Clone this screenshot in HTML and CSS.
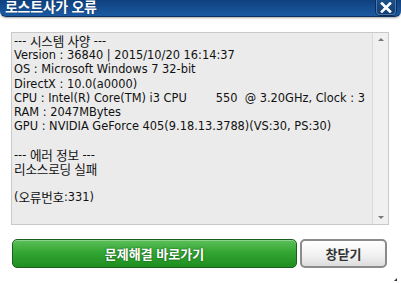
FILE: index.html
```html
<!DOCTYPE html>
<html lang="ko">
<head>
<meta charset="utf-8">
<link rel="stylesheet" href="styles.css">
</head>
<body>
<div class="win">
  <div class="titlebar">
    <span class="title">로스트사가 오류</span>
    <span class="close"><svg width="12" height="11" viewBox="0 0 12 11"><path d="M2 1.5 L10 9.5 M10 1.5 L2 9.5" stroke="#fff" stroke-width="2.6" stroke-linecap="square"/></svg></span>
  </div>
  <div class="content">
    <div class="logbox">
      <div class="logtext">--- <span class="ko">시스템 사양</span> ---
Version : 36840 | 2015/10/20 16:14:37
OS : Microsoft Windows 7 32-bit
DirectX : 10.0(a0000)
CPU : Intel(R) Core(TM) i3 CPU        550  @ 3.20GHz, Clock : 3
RAM : 2047MBytes
GPU : NVIDIA GeForce 405(9.18.13.3788)(VS:30, PS:30)

--- <span class="ko">에러 정보</span> ---
<span class="ko">리소스로딩 실패</span>

(<span class="ko">오류번호</span>:331)</div>
      <div class="scrollbar">
        <span class="arrow up"></span>
        <span class="arrow down"></span>
      </div>
    </div>
    <div class="buttons">
      <button class="btn green">문제해결 바로가기</button>
      <button class="btn gray">창닫기</button>
    </div>
  </div>
  <span class="grip"></span>
</div>
</body>
</html>
```
FILE: styles.css
```css
* { box-sizing: border-box; }
html, body { margin: 0; padding: 0; background: #fff; }
body { width: 401px; height: 283px; overflow: hidden; font-family: "DejaVu Sans", "Noto Sans CJK KR", sans-serif; }
.win { position: relative; width: 401px; height: 283px; }
.titlebar {
  height: 17px;
  background: linear-gradient(#0f417f, #1b5aa2);
  border-bottom: 1px solid #0b3263;
  border-bottom-left-radius: 6px;
  border-bottom-right-radius: 6px;
  box-shadow: 0 1px 2px rgba(0,0,0,0.35);
  display: flex;
  justify-content: space-between;
  align-items: flex-start;
  padding: 0 5px 0 5px;
}
.title {
  color: #fff;
  font-family: "Noto Sans CJK KR", sans-serif;
  font-weight: 700;
  font-size: 14px;
  line-height: 14px;
  margin-top: -1px;
  letter-spacing: -0.3px;
  text-shadow: 0 0 1px #062550;
}
.close {
  width: 20px;
  height: 15px;
  background: linear-gradient(#1c4f8a, #123e72);
  border: 1px solid #4d77a8;
  border-top: none;
  border-radius: 0 0 4px 4px;
  box-shadow: 0 0 0 1px #0a2e5c;
  display: flex;
  align-items: center;
  justify-content: center;
}
.content { padding: 15px 12px 0 11px; }
.logbox {
  height: 193px;
  border: 1px solid #c9c9c9;
  background: #ebebeb;
  display: flex;
}
.logtext {
  flex: 1;
  white-space: pre;
  overflow: hidden;
  font-family: "DejaVu Sans", "Noto Sans CJK KR", sans-serif;
  font-size: 11.4px;
  line-height: 14.2px;
  color: #111;
  padding: 1px 0 0 2px;
}
.ko {
  display: inline-block;
  height: 14px;
  vertical-align: top;
  font-family: "Noto Sans CJK KR", sans-serif;
  font-size: 12.6px;
  line-height: 14px;
  letter-spacing: -0.2px;
}
.scrollbar {
  width: 16px;
  background: #f0f0f0;
  border-left: 1px solid #dadada;
  position: relative;
}
.arrow { position: absolute; left: 5px; width: 0; height: 0; border-left: 3px solid transparent; border-right: 3px solid transparent; }
.arrow.up { top: 5px; border-bottom: 3px solid #777; }
.arrow.down { bottom: 5px; border-top: 3px solid #777; }
.buttons { display: flex; gap: 3px; margin-top: 14px; padding-left: 1px; }
.btn {
  height: 29px;
  font-family: "Noto Sans CJK KR", sans-serif;
  font-weight: 700;
  font-size: 13px;
  border-radius: 5px;
  padding: 0;
  margin: 0;
}
.btn.green {
  width: 285px;
  color: #fff;
  background: linear-gradient(#5cc05a 0%, #34a634 45%, #1f8f20 100%);
  border: 1px solid #1b5e1d;
  text-shadow: 0 0 2px #0d4a0f;
  box-shadow: inset 0 1px 0 rgba(255,255,255,0.3);
}
.btn.gray {
  width: 87px;
  color: #333;
  background: linear-gradient(#ffffff, #f0f0f0 60%, #dcdcdc);
  border: 2px solid #8b8b8b;
}
.grip { position: absolute; right: 4px; bottom: 2px; width: 0; height: 0; border-left: 3px solid transparent; border-bottom: 3px solid #333; }
```
